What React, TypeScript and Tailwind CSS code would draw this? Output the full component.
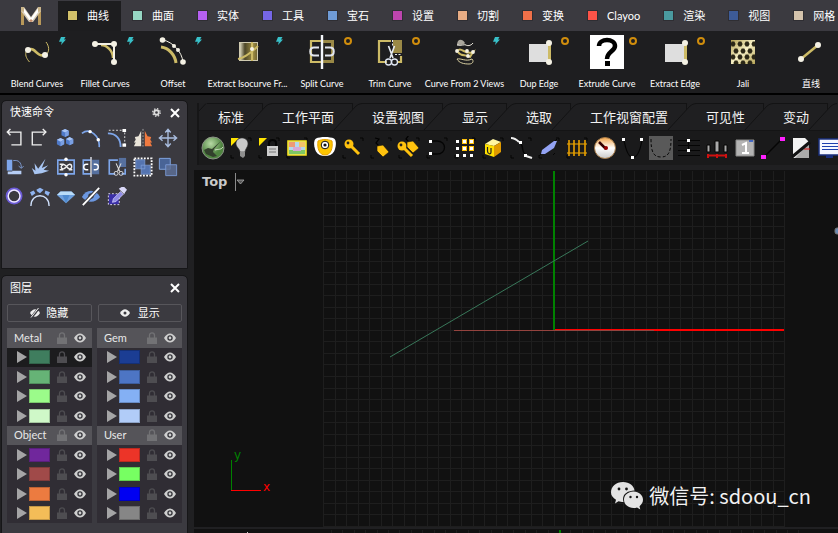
import React from 'react';

type IconProps = { children: React.ReactNode };

const GOLD = '#cdbb66';
const CREAM = '#f4f1e4';
const BLUE = '#7ea6ea';

/* ---------- main tabs ---------- */

const mainTabs = [
  { label: '曲线', color: '#d3c16a' },
  { label: '曲面', color: '#96d6c3' },
  { label: '实体', color: '#b660f2' },
  { label: '工具', color: '#7566e6' },
  { label: '宝石', color: '#6f9bd6' },
  { label: '设置', color: '#bd45ae' },
  { label: '切割', color: '#e8ac84' },
  { label: '变换', color: '#ef7049' },
  { label: 'Clayoo', color: '#fe5348' },
  { label: '渲染', color: '#4a9a9f' },
  { label: '视图', color: '#3d5b97' },
  { label: '网格', color: '#d3c2ab' },
];

function Logo() {
  return (
    <svg className="h-[18px] w-5" viewBox="0 0 20 18">
      <path d="M0 2h3v16H0zM17 2h3v16h-3z" fill="#b8985a" />
      <path d="M3 0l7 10 7-10h3v4l-8 11h-4L0 4V0z" fill="#d9cdb6" />
      <path d="M2 0l8 11 8-11v4l-7 10H9L2 4z" fill="#fff" />
      <path d="M0 0h3v5L0 4zM20 0h-3v5l3-1z" fill="#c9b48a" />
      <path d="M8 14l2-2 2 2-2 1z" fill="#c58b6a" />
    </svg>
  );
}

/* ---------- ribbon icons (34 x 34) ---------- */

function Big({ children }: IconProps) {
  return (
    <svg className="h-[34px] w-[34px]" viewBox="0 0 34 34" fill="none">
      {children}
    </svg>
  );
}

function Dots({ points, r = 3 }: { points: [number, number][]; r?: number }) {
  return (
    <>
      {points.map(([x, y]) => (
        <circle key={`${x}-${y}`} cx={x} cy={y} r={r} fill={CREAM} />
      ))}
    </>
  );
}

const BlendIcon = (
  <Big>
    <path d="M6 17c-1 4 1 7 3.500 10M26 7c3 4 4 9 0 13" stroke={GOLD} strokeWidth="1" />
    <path d="M8 15c8-4 8 8 17 5" stroke={GOLD} strokeWidth="2.800" />
    <Dots points={[[8, 15], [25, 20]]} />
  </Big>
);
const FilletIcon = (
  <Big>
    <path d="M13 10c6 0 12 6 12 13" stroke={GOLD} strokeWidth="2.500" />
    <path d="M7 9h19v18" stroke={CREAM} strokeWidth="2" />
    <Dots points={[[7, 9], [26, 9], [26, 27]]} />
  </Big>
);
const OffsetIcon = (
  <Big>
    <path d="M5 12c8 1 14 8 15 16" stroke={GOLD} strokeWidth="3" />
    <path d="M7 5c10 2 19 12 20 22" stroke={CREAM} strokeWidth="1" />
    <Dots points={[[6.5, 5], [27, 27]]} r={2.8} />
    <Dots points={[[18, 11], [22, 15]]} r={2} />
  </Big>
);
const IsoIcon = (
  <Big>
    <defs>
      <linearGradient id="iso">
        <stop offset="0" stopColor="#e6e2c8" />
        <stop offset=".3" stopColor="#4c4628" />
        <stop offset=".75" stopColor="#a08f45" />
        <stop offset="1" stopColor="#6d6130" />
      </linearGradient>
    </defs>
    <rect x="8.500" y="7.500" width="18" height="18" fill="url(#iso)" stroke="#cfcab0" />
    <path d="M21 7v19" stroke={GOLD} strokeWidth="2" />
    <path d="M7 24c6-1 11-4 20-13" stroke={GOLD} strokeWidth="2" />
    <circle cx="21" cy="14" r="2" fill={CREAM} />
  </Big>
);
const SplitIcon = (
  <Big>
    <path d="M17 5h12v23H17z" fill="#9a8946" />
    <path d="M18 8h8v17h-8z" fill="#26241d" />
    <path d="M17 6H6v21h11" stroke={GOLD} strokeWidth="2.200" />
    <path d="M14 12.500H9c-5 0-5 8 0 8h5M20 12.500h5c5 0 5 8 0 8h-5" stroke="#e3e7f0" strokeWidth="2" />
    <path d="M17 0v34" stroke="#f4f6fa" strokeWidth="2.400" />
  </Big>
);
const TrimIcon = (
  <Big>
    <path d="M20 5h9v13h-9z" fill="#9a8946" />
    <path d="M18 6H6v21h8M24 27h4v-6" stroke={GOLD} strokeWidth="2.200" />
    <path d="M15.500 11l4.500 12M21.500 11L17 23" stroke="#e6ecf4" strokeWidth="1.600" />
    <circle cx="15.500" cy="27" r="3" stroke="#dfe6f2" strokeWidth="1.300" />
    <circle cx="21.500" cy="27" r="3" stroke="#dfe6f2" strokeWidth="1.300" />
    <path d="M19.500 5v7M22 19.500h7" stroke="#e6ecf4" strokeDasharray="2 1.500" />
  </Big>
);
const TwoViewsIcon = (
  <Big>
    <path d="M9 10c0-6 5-7 8-2 0 1-4 2-8 2z" fill="#aaa79d" />
    <path d="M9 10c4 1 8-1 9 0s5 1 7-2" stroke={CREAM} />
    <path d="M9 17c3-7 9 4 16 0l-3 5c-5-3-9 0-12-5" stroke={GOLD} strokeWidth="2" />
    <Dots points={[[9, 16], [25, 17], [19, 16], [20, 21]]} r={1.9} />
    <path d="M9 24c4-1 9 3 15 0 2 2 1 5-3 5-5 0-10-1-12-5z" stroke="#d9cfa0" />
  </Big>
);
const EdgeIcon = (
  <Big>
    <path d="M7 9h19v18H7z" fill="#dedede" />
    <path d="M27.500 8v20" stroke={GOLD} strokeWidth="3" />
    <Dots points={[[27, 8], [27, 27]]} />
  </Big>
);
const ExtrudeIcon = (
  <Big>
    <path d="M0 0h34v34H0z" fill="#fff" />
    <path d="M9 11c0-8 16-8 16 0 0 5-8 6-8 13" stroke="#000" strokeWidth="4.500" />
    <path d="M15 26h5v5h-5z" fill="#000" />
  </Big>
);
const holes: [number, number][] = [
  [7, 9], [14, 9], [21, 9], [28, 9], [10, 16], [17, 16], [24, 16], [7, 22], [14, 22], [21, 22], [28, 22], [10, 28], [17, 28], [24, 28],
];
const JaliIcon = (
  <Big>
    <defs>
      <linearGradient id="jali" x2="1" y2="1">
        <stop offset="0" stopColor="#b5a356" />
        <stop offset=".5" stopColor="#f7f0c4" />
        <stop offset="1" stopColor="#b7a558" />
      </linearGradient>
      <clipPath id="jaliClip">
        <rect x="5" y="5" width="24" height="24" />
      </clipPath>
    </defs>
    <g clipPath="url(#jaliClip)">
      <path d="M5 5h24v24H5z" fill="url(#jali)" />
      {holes.map(([x, y]) => (
        <path key={`${x}-${y}`} d={`M${x - 2.6} ${y}l1.300-2.400h2.600l1.300 2.400-1.300 2.400h-2.600z`} fill="#2b2716" />
      ))}
    </g>
  </Big>
);
const LineIcon = (
  <Big>
    <path d="M7 24l17-14" stroke={GOLD} strokeWidth="2.500" />
    <Dots points={[[7, 24], [24, 10]]} />
  </Big>
);

type Badge = 'bolt' | 'ring' | null;
const commands: { label: string; icon: React.ReactNode; badge: Badge; wide?: boolean }[] = [
  { label: 'Blend Curves', icon: BlendIcon, badge: 'bolt' },
  { label: 'Fillet Curves', icon: FilletIcon, badge: 'bolt' },
  { label: 'Offset', icon: OffsetIcon, badge: 'bolt' },
  { label: 'Extract Isocurve Fr...', icon: IsoIcon, badge: 'bolt', wide: true },
  { label: 'Split Curve', icon: SplitIcon, badge: 'ring' },
  { label: 'Trim Curve', icon: TrimIcon, badge: 'ring' },
  { label: 'Curve From 2 Views', icon: TwoViewsIcon, badge: 'bolt', wide: true },
  { label: 'Dup Edge', icon: EdgeIcon, badge: 'ring' },
  { label: 'Extrude Curve', icon: ExtrudeIcon, badge: 'ring' },
  { label: 'Extract Edge', icon: EdgeIcon, badge: 'ring' },
  { label: 'Jali', icon: JaliIcon, badge: null },
  { label: '直线', icon: LineIcon, badge: null },
];

function BadgeMark({ kind }: { kind: Badge }) {
  if (kind === 'bolt') {
    return (
      <svg className="absolute top-1.5 right-[5px] h-2 w-[7px]" viewBox="0 0 7 8">
        <path d="M2 0h4.500L5 2.500h2L2 8l.8-3.300H0z" fill="#38c0c8" />
      </svg>
    );
  }
  if (kind === 'ring') {
    return <span className="absolute top-1.5 right-1 h-2 w-2 rounded-full border-2 border-[#d08d0c]" />;
  }
  return null;
}

/* ---------- quick command icons ---------- */

function Mid({ children }: IconProps) {
  return (
    <svg className="h-5 w-5" viewBox="0 0 22 22" fill="none">
      {children}
    </svg>
  );
}

function Cube({ x, y }: { x: number; y: number }) {
  return (
    <g transform={`translate(${x} ${y})`}>
      <path d="M4 0l4 2v5L4 9 0 7V2z" fill="#4f79c8" />
      <path d="M4 0l4 2-4 2-4-2z" fill="#a9c5f5" />
      <path d="M4 4l4-2v5L4 9z" fill="#7ba0e3" />
    </g>
  );
}

const quickIcons: { name: string; icon: React.ReactNode }[] = [
  { name: '撤销', icon: <Mid><path d="M3 4.500h14.500v14H7M6 1L2.500 4.500 6 8" stroke="#f0f0f0" strokeWidth="1.500" /></Mid> },
  { name: '重做', icon: <Mid><path d="M16 4.500H2.500v14H13M14 1l3.500 3.500L14 8" stroke="#f0f0f0" strokeWidth="1.500" /></Mid> },
  { name: '实体', icon: <Mid><Cube x={6} y={1} /><Cube x={1} y={11} /><Cube x={11} y={10} /></Mid> },
  { name: '曲线点', icon: <Mid><path d="M1 6c9-7 20 3 19 15" stroke={BLUE} strokeWidth="1.800" /><circle cx="10" cy="4" r="1.900" fill="#fff" /><circle cx="19" cy="13" r="1.900" fill="#fff" /></Mid> },
  { name: '圆角', icon: <Mid><path d="M2 2.500h17.500V18" stroke="#e8e8e8" strokeDasharray="2 2" /><path d="M1 6c9 0 14 6 14 15" stroke={BLUE} strokeWidth="2" /><path d="M17 1h4v3.500h-4zM17 17h4v3.500h-4z" fill="#fff" /></Mid> },
  { name: '镜像', icon: <Mid><path d="M11 1v20" stroke="#aaa" strokeDasharray="2 1.500" /><path d="M9 3v17H1l2-4H1l2-3-1-3 4-1z" fill="#e9e4d9" /><path d="M13 3v17h8l-2-4h2l-2-3 1-3-4-1z" fill="#f07a40" /></Mid> },
  { name: '移动', icon: <Mid><path d="M11 1.500v19M1.500 11h19M8 5l3-3.500L14 5M8 17l3 3.500 3-3.500M5 8l-3.500 3L5 14M17 8l3.500 3-3.500 3" stroke="#a9bddf" strokeWidth="1.500" /></Mid> },
  { name: '旋转', icon: <Mid><path d="M2 3h6v12H2z" fill={BLUE} /><path d="M8 15h10v4H3v-3h5z" fill="#b6cdf5" /><path d="M9 4c6-1 9 2 9 8M15 10l3 2.500L20.500 10" stroke="#7f9cd2" /></Mid> },
  { name: '炸开', icon: <Mid><path d="M5 19L2 12l4 3-1-8 4 6 8-11-4 10 7-3-5 5 6 1-8 3z" fill="#a8c5f2" /></Mid> },
  { name: '组合', icon: <Mid><path d="M2 3.500h18v15H2z" stroke={BLUE} strokeWidth="1.800" /><path d="M4 8h4c3 0 4 5 7 5s3-5 0-5-4 5-7 5-3-4 0-4M4 14h4M14 14h4" stroke="#f0f0f0" strokeWidth="1.500" /><circle cx="11" cy="2.500" r="1.900" fill="#fff" /><circle cx="11" cy="19.500" r="1.900" fill="#fff" /></Mid> },
  { name: '分割', icon: <Mid><path d="M12 3h8v16h-8z" fill="#56709f" /><path d="M11 3.500H2.500v15H11" stroke={BLUE} strokeWidth="1.800" /><path d="M8 8H6c-4 0-4 6 0 6h2M14 8h2c4 0 4 6 0 6h-2" stroke="#fff" strokeWidth="1.500" /><path d="M11 0v22" stroke="#c9cbd2" strokeWidth="1.800" /></Mid> },
  { name: '修剪', icon: <Mid><path d="M13 1h8v10h-8z" fill="#56709f" /><path d="M12 3.500H2.500v15H9M16 18.500h4V13" stroke={BLUE} strokeWidth="1.800" /><path d="M10 7l4 9M15.500 7l-4 9" stroke="#ddd" strokeWidth="1.200" /><circle cx="10" cy="18" r="2.200" stroke="#ddd" /><circle cx="15.500" cy="18" r="2.200" stroke="#ddd" /></Mid> },
  { name: '群组', icon: <Mid><path d="M3 3h10v10H3zM9 9h10v10H9z" fill="#5574b0" stroke="#86a6e0" strokeWidth=".7" /><path d="M1.500 1.500h19v19h-19z" stroke="#fff" strokeWidth="2" strokeDasharray="2 1.500" /></Mid> },
  { name: '复制', icon: <Mid><path d="M1.500 1.500h12v12h-12z" fill="#496496" stroke="#86abe8" /><path d="M8.500 8.500h12v12h-12z" fill="#5d6f95" fillOpacity=".85" stroke="#7899d4" /></Mid> },
  { name: '圆环', icon: <Mid><circle cx="10" cy="11" r="7.500" stroke="#6c5bd8" strokeWidth="3.500" /><circle cx="10" cy="11" r="6.500" stroke="#efeaff" strokeWidth="1.600" /></Mid> },
  { name: '沿曲线', icon: <Mid><path d="M1 22c0-15 20-15 20 0" stroke="#cfe0fb" strokeWidth="1.500" /><path d="M0 7l4-2 2 3-4 3zM7 4l4-2 4 2-4 4-3-2zM17 5l5 2-2 4-4-3z" fill="#8fb4f0" /></Mid> },
  { name: '钻石', icon: <Mid><path d="M5 6h12l4 4-10 9L1 10z" fill="#6ea0de" /><path d="M5 6h12l4 4H1z" fill="#b9dcf8" /><path d="M7 10h8l-4 9z" fill="#4f8bd0" /></Mid> },
  { name: '隐藏', icon: <Mid><path d="M1 12c5-9 15-9 20 0-5 7-15 7-20 0z" fill="#6c97e0" /><circle cx="11" cy="11" r="3" fill="#33363f" /><path d="M2 21L20 2" stroke="#3b3a40" strokeWidth="4" /><path d="M2 21L20 2" stroke="#fff" strokeWidth="2" /></Mid> },
  { name: '取样', icon: <Mid><path d="M2 9h11v11H2z" fill="#3a2fa8" /><path d="M1.500 8.500h12v12h-12z" stroke="#e4e0ff" strokeDasharray="2 2" /><path d="M6 18l1-4 8-8 3 3-8 8z" fill="#8f8be6" stroke="#e4e0ff" strokeWidth=".7" /><path d="M13 3l6 6 1-2 2-3-3-3-3 0z" fill="#d9d8f8" /></Mid> },
];

/* ---------- layer panel ---------- */

const layerTables = [
  [
    { name: 'Metal', colors: ['#3f7d5e', '#66b376', '#9bfb8a', '#cff8c8'] },
    { name: 'Object', colors: ['#70279c', '#a04a49', '#ec7b40', '#f3bd58'] },
  ],
  [
    { name: 'Gem', colors: ['#1b3d93', '#4d75c4', '#84b0f4', '#b1ccf8'] },
    { name: 'User', colors: ['#ec3428', '#77ff62', '#0000f2', '#868686'] },
  ],
];

function Lock({ tone }: { tone: string }) {
  return (
    <svg className="h-3 w-2.5" viewBox="0 0 10 12" fill="none">
      <path d="M2.500 6V3.500c0-3.400 5-3.400 5 0V6" stroke={tone} strokeWidth="1.300" />
      <path d="M0 5.500h10V12H0z" fill={tone} />
    </svg>
  );
}

function Eye({ tone = '#cfcfcf' }: { tone?: string }) {
  return (
    <svg className="h-2.5 w-3" viewBox="0 0 12 10" fill="none">
      <path d="M0 5c3.500-6 8.500-6 12 0-3.500 6-8.500 6-12 0z" fill={tone} />
      <circle cx="6" cy="5" r="2.700" fill="#323238" />
      <circle cx="6" cy="5" r="1.400" fill={tone} />
    </svg>
  );
}

function LayerTable({ groups, marked }: { groups: (typeof layerTables)[number]; marked: boolean }) {
  return (
    <div className="grid h-[195px] flex-1 auto-rows-fr bg-[#302d34]">
      {groups.map((group, g) => (
        <React.Fragment key={group.name}>
          <div className="flex items-center bg-[#555459] pr-1.5 pl-[7px]">
            <span className="flex-1 text-[11px] leading-4 text-[#e8e8e8]">{group.name}</span>
            <button aria-label={`${group.name} lock`} className="mr-[7px]"><Lock tone="#727275" /></button>
            <button aria-label={`${group.name} visible`}><Eye /></button>
          </div>
          {group.colors.map((color, i) => (
            <div key={color} className={`flex items-center pr-1.5 pl-2.5 ${marked && g === 0 && i === 0 ? 'bg-[#1c1c1e]' : ''}`}>
              <svg className="mr-0.5 h-3 w-2.5" viewBox="0 0 10 12"><path d="M0 0l10 6-10 6z" fill="#a5a5a6" /></svg>
              <span className="h-3.5 w-[21px] border border-black/20" style={{ backgroundColor: color }} />
              <span className="flex-1" />
              <button aria-label={`${group.name} ${i + 1} lock`} className="mr-[7px]"><Lock tone="#4e4d51" /></button>
              <button aria-label={`${group.name} ${i + 1} visible`}><Eye /></button>
            </div>
          ))}
        </React.Fragment>
      ))}
    </div>
  );
}

function CloseButton() {
  return (
    <button aria-label="关闭" className="ml-[9px]">
      <svg className="h-2.5 w-2.5" viewBox="0 0 10 10"><path d="M1 1l8 8M9 1L1 9" stroke="#fff" strokeWidth="2" /></svg>
    </button>
  );
}

/* ---------- viewport tabs and toolbar ---------- */

const viewTabs = ['标准', '工作平面', '设置视图', '显示', '选取', '工作视窗配置', '可见性', '变动', ''];

function Tool({ name, children, bare = false }: { name: string; children: React.ReactNode; bare?: boolean }) {
  return (
    <button aria-label={name} className="w-7 shrink-0">
      <svg className="mx-auto h-6 w-6" viewBox="0 0 24 24" fill="none">
        {!bare && <path d="M2 19v3h3M19 2h3v3" stroke="#050505" strokeWidth="1" />}
        {children}
      </svg>
    </button>
  );
}

function Key({ x = 0, y = 0 }: { x?: number; y?: number }) {
  return (
    <g transform={`translate(${x} ${y})`}>
      <path d="M9 9l9 9M14 16l2-2" stroke="#ffc20e" strokeWidth="3" />
      <circle cx="8" cy="8" r="4.500" fill="#ffc20e" />
      <circle cx="7" cy="7" r="1.400" fill="#222" />
    </g>
  );
}

function Tag({ x = 0, y = 0 }: { x?: number; y?: number }) {
  return (
    <g transform={`translate(${x} ${y})`}>
      <path d="M6 2l4 1-3 4 3 3" stroke="#000" strokeWidth="1.200" />
      <path d="M8 10l6-1 6 7-6 5-6-6z" fill="#ffc20e" stroke="#111" strokeWidth=".6" />
    </g>
  );
}

const squares = (points: [number, number][], color = '#fff') =>
  points.map(([x, y]) => <path key={`${x}-${y}`} d={`M${x} ${y}h3v3h-3z`} fill={color} />);

function Toolbar() {
  return (
    <div className="flex h-[34px] items-center overflow-hidden bg-[#1a1a1b]">
      <Tool name="渲染" bare>
        <defs>
          <radialGradient id="globe" cx=".4" cy=".3"><stop offset="0" stopColor="#b6d8a4" /><stop offset="1" stopColor="#4f8440" /></radialGradient>
        </defs>
        <circle cx="12" cy="12" r="11" fill="url(#globe)" stroke="#8a9185" />
        <path d="M3 14l4-2 4 1 9-8-7 8-1 3 4 4-4 1-7-3z" fill="#32402c" />
        <path d="M14 14c3-1 6 0 8-3" stroke="#d3e6c9" />
      </Tool>
      <Tool name="灯光">
        <path d="M2 2h8L2 10z" fill="#ffe400" />
        <path d="M7 8c0-8 12-8 12 0 0 3-3 5-3 8h-5c0-3-4-5-4-8z" fill="#c9c9c9" stroke="#333" strokeWidth=".6" />
        <path d="M11 16h5v4l-2 2-3-2z" fill="#8e8e8e" />
      </Tool>
      <Tool name="锁定">
        <path d="M2 2h8L2 10z" fill="#ffe400" />
        <path d="M12 10V7c0-4 7-4 7 0v3" stroke="#050505" strokeWidth="2" />
        <path d="M10 10h11v10H10z" fill="#cfcfcf" />
        <path d="M12 13h7M12 16h7" stroke="#777" />
      </Tool>
      <Tool name="图层">
        <path d="M3 5h18v14H3z" fill="#b4d8ee" stroke="#f7e31c" strokeWidth="1.600" />
        <path d="M4 6h6v5H4z" fill="#ee9a78" /><path d="M14 6h6v5h-6z" fill="#f4c26c" /><path d="M4 14h16v4H4z" fill="#7fc765" /><path d="M8 11h8v4H8z" fill="#d7a9d8" />
      </Tool>
      <Tool name="属性" bare>
        <path d="M3 2.500c4-2 14-2 18 0 3 2 2 9 0 13-3 6-15 6-18 0-2-4-3-11 0-13z" fill="#fff" />
        <path d="M5 5c4-2 10-2 14 0 1 7-1 14-7 14S4 12 5 5z" fill="#fdc500" stroke="#e5a100" />
        <circle cx="12" cy="9" r="3.800" fill="#fff" stroke="#111" /><circle cx="12" cy="9" r="1.600" fill="#111" />
      </Tool>
      <Tool name="钥匙"><Key /></Tool>
      <Tool name="标签"><Tag /></Tool>
      <Tool name="钥匙组"><Key x={-3} y={2} /><Tag x={2} y={-4} /></Tool>
      <Tool name="控制点"><path d="M5 5h7c10 0 10 13 0 13H5" stroke="#050505" strokeWidth="1.300" />{squares([[4, 4], [4, 16]])}</Tool>
      <Tool name="点格">
        {squares([[3, 4], [3, 11], [3, 18], [10, 18], [17, 18]])}
        <path d="M9 3h5v5H9zM16 3h5v5h-5zM9 10h5v5H9zM16 10h5v5h-5z" fill="#ffc20e" />
        {squares([[10, 4], [17, 4], [10, 11], [17, 11]])}
      </Tool>
      <Tool name="立方体">
        <path d="M4 8l8-5 8 3-7 4z" fill="#fff6a0" /><path d="M4 8l9 2v11l-9-3z" fill="#ffe000" /><path d="M13 10l7-4v10l-7 5z" fill="#e09a00" /><path d="M6.500 11v4c0 3 3.500 4 3.500 1v-4" stroke="#222" strokeWidth="1.200" />
      </Tool>
      <Tool name="曲线">
        <path d="M10 6c6 2 1 12 8 13" stroke="#050505" strokeWidth="1.400" /><path d="M2 2c3 0 5 1 8 4M17 20l6 2" stroke="#eee" strokeWidth="2" />{squares([[10, 5], [15, 18]])}
      </Tool>
      <Tool name="平面"><path d="M2 20L20 3M16 19l2-2" stroke="#050505" /><path d="M5 14l12-9h3l-3 7-9 6H4z" fill="#93a3f4" /></Tool>
      <Tool name="栅栏"><path d="M2 8h20M2 17h20" stroke="#ffb400" /><path d="M4 4v16M9 4v16M14 4v16M20 4v16" stroke="#e9a000" strokeWidth="1.600" /></Tool>
      <Tool name="仪表" bare>
        <defs><linearGradient id="gauge" x2="0" y2="1"><stop offset="0" stopColor="#f3a64b" /><stop offset=".5" stopColor="#fff" /><stop offset="1" stopColor="#c9c9c9" /></linearGradient></defs>
        <circle cx="12" cy="12" r="10.500" fill="url(#gauge)" stroke="#a57a48" /><path d="M6 6l7 7" stroke="#300" strokeWidth="2.500" /><circle cx="13" cy="12" r="2" fill="#900" />
      </Tool>
      <Tool name="抛物线" bare><path d="M3 4c4 23 14 23 18 0" stroke="#050505" strokeWidth="1.200" />{squares([[1, 2], [19, 2], [10, 20]])}</Tool>
      <Tool name="虚线" bare><path d="M0 0h24v24H0z" fill="#595959" /><path d="M2 3c0 12 2 18 10 18S22 15 22 3" stroke="#050505" strokeDasharray="3 2" /></Tool>
      <Tool name="间距" bare><path d="M1 4.500h22M1 9.500h22M1 14.500h22M1 19.500h22M11.500 4v10" stroke="#050505" />{squares([[10, 3], [10, 13]])}</Tool>
      <Tool name="对齐" bare><path d="M2 9h3v7H2zM10 5h4v11h-4zM19 9h3v7h-3z" fill="#aaa" stroke="#050505" /><path d="M3 19.500h18M3 18v4M12 18v4M21 18v4" stroke="#d01010" strokeWidth="2" /></Tool>
      <Tool name="编号" bare>
        <path d="M3 4h18v16H3z" fill="#b4b4b4" stroke="#888" /><path d="M16 5h4" stroke="#2653c8" strokeWidth="1.500" /><path d="M9 9l4-2v10M9 17h7" stroke="#fff" strokeWidth="2" />
      </Tool>
      <Tool name="直线" bare><path d="M3 21L21 3" stroke="#050505" strokeWidth="1.500" /><path d="M0 19h5v4H0zM19 1h5v4h-5z" fill="#ff20ff" /></Tool>
      <Tool name="图纸" bare>
        <path d="M4 2h12l4 4v16H4z" fill="#f3f3f3" /><path d="M20 7v15H6z" fill="#aaa" /><path d="M15 13h6" stroke="#e01010" /><path d="M3 21L21 6" stroke="#111" strokeWidth="3" />
      </Tool>
      <Tool name="屏幕" bare>
        <path d="M2 3h22v16H2z" fill="#f4f7ff" stroke="#1a2f7c" strokeWidth="1.500" /><path d="M5 7.500h16M5 10.500h16M5 13.500h16" stroke="#1c3fae" strokeWidth="1.200" /><path d="M9 19h7v3H9z" fill="#1a2f7c" />
      </Tool>
    </div>
  );
}

/* ---------- drawing canvas ---------- */

const columns = Array.from({ length: 41 }, (_, i) => Math.round(129 + i * 11.53) + 0.5);
const rows = Array.from({ length: 31 }, (_, i) => Math.round(10 + i * 11.53) + 0.5);
const lowerTicks = Array.from({ length: 42 }, (_, i) => Math.round(137 + i * 11.4) + 0.5);

function Scene() {
  return (
    <svg className="absolute inset-0 h-full w-full" fill="none">
      {columns.map((x) => <line key={x} x1={x} x2={x} y1="1" y2="356" stroke="#1e1e1e" />)}
      {rows.map((y) => <line key={y} y1={y} y2={y} x1="129" x2="591" stroke="#1e1e1e" />)}
      <path d="M260 160.500h100" stroke="#94433e" />
      <path d="M360 160h230" stroke="#ff0000" strokeWidth="2" />
      <path d="M360 160.500h100" stroke="#94433e" />
      <path d="M360 1v159" stroke="#008200" strokeWidth="2" />
      <path d="M196 187L394 71" stroke="#39785a" />
      <path d="M37.500 290v30" stroke="#008200" />
      <path d="M37 320.500h30" stroke="#ff0000" />
      <rect x="641" y="58" width="8" height="6" rx="2" fill="#6d8bb4" stroke="#777" />
      <text x="40" y="289" fontSize="12" fontFamily="'DejaVu Sans', sans-serif" fill="#008200">y</text>
      <text x="69" y="321" fontSize="12" fontFamily="'DejaVu Sans', sans-serif" fill="#ff0000">x</text>
    </svg>
  );
}

function Watermark() {
  return (
    <div className="absolute right-[27px] bottom-[17px] flex items-center gap-1.5">
      <svg className="h-7 w-8" viewBox="0 0 32 28">
        <path d="M12 0c6.500 0 11 4 11.500 8.500C17 8.500 12 12 12 17c0 1 .2 2 .5 3-2 0-3.500-.2-5-.7L4 21.500l1-3.800C2 16 0 13.500 0 10.500 0 4.500 5 0 12 0z" fill="#e4e4e4" />
        <path d="M22.500 9.500c5.500 0 9.500 3.700 9.500 8.300 0 2.700-1.400 4.800-3.500 6.400l.8 3.300-3.300-2c-1 .4-2.200.5-3.500.5-5.300 0-9.500-3.500-9.500-8.200s4-8.300 9.500-8.300z" fill="#e4e4e4" />
        <g fill="#161616"><circle cx="8" cy="7" r="1.400" /><circle cx="15.500" cy="7" r="1.400" /><circle cx="19.500" cy="15" r="1.200" /><circle cx="26" cy="15" r="1.200" /></g>
      </svg>
      <span className="font-['Noto_Sans_CJK_SC',sans-serif] text-xl leading-7 text-[#f2f2f2]">微信号: sdoou_cn</span>
    </div>
  );
}

export default function App() {
  return (
    <div className="flex h-screen flex-col overflow-hidden bg-[#202022] font-['Lato','Noto_Sans_CJK_SC',sans-serif] text-white">
      <header className="flex h-[31px] shrink-0 bg-[#3b3a40]">
        <div className="flex w-[58px] shrink-0 items-center pl-[21px]"><Logo /></div>
        <nav className="flex min-w-0 flex-1 gap-0.5 overflow-hidden pt-px">
          {mainTabs.map((tab, i) => (
            <button key={tab.label} className={`flex shrink-0 items-center gap-2.5 pr-3 pl-2.5 text-[11px] ${i === 0 ? 'bg-[#1d1d1f]' : ''}`}>
              <span className="mb-px h-[9px] w-[9px] outline outline-black/20" style={{ backgroundColor: tab.color }} />
              {tab.label}
            </button>
          ))}
        </nav>
      </header>

      <div className="flex h-16 shrink-0 overflow-hidden border-b-2 border-black bg-[#1e1e20] pl-[3px]">
        {commands.map((c) => (
          <button key={c.label} className={`relative flex shrink-0 flex-col items-center pt-1 ${c.wide ? 'w-[81px]' : 'w-[68px]'}`}>
            {c.icon}
            <span className="mt-[9px] text-[9px] leading-3 whitespace-nowrap">{c.label}</span>
            <BadgeMark kind={c.badge} />
          </button>
        ))}
      </div>

      <div className="flex min-h-0 flex-1 pt-1.5">
        <aside className="mr-[7px] ml-0.5 flex w-[185px] shrink-0 flex-col gap-2">
          <section className="h-[167px] shrink-0 rounded-t-sm bg-[#3b3a40] outline outline-[#161618]">
            <div className="flex h-[23px] items-center pr-[7px] pl-2">
              <h2 className="flex-1 text-[11px]">快速命令</h2>
              <button aria-label="设置">
                <svg className="h-[9px] w-[9px]" viewBox="0 0 10 10" fill="none"><circle cx="5" cy="5" r="2.500" stroke="#ddd" strokeWidth="2" /><circle cx="5" cy="5" r="4.200" stroke="#ddd" strokeWidth="1.400" strokeDasharray="1.600 1.700" /></svg>
              </button>
              <CloseButton />
            </div>
            <div className="mr-1.5 grid grid-cols-7 gap-y-[9px] pt-1">
              {quickIcons.map((q) => (
                <button key={q.name} aria-label={q.name} className="flex justify-center">{q.icon}</button>
              ))}
            </div>
          </section>

          <section className="flex-1 rounded-t-sm bg-[#3b3a40] outline outline-[#161618]">
            <div className="flex h-6 items-center pr-[7px] pl-2">
              <h2 className="flex-1 text-[11px]">图层</h2>
              <CloseButton />
            </div>
            <div className="flex gap-1.5 px-[5px] pt-1">
              <button className="flex h-[18px] flex-1 items-center justify-center gap-1.5 rounded-xs border border-[#57565b] text-[11px]">
                <svg className="h-2.5 w-2.5" viewBox="0 0 10 10" fill="none"><path d="M0 5c3-5 7-5 10 0-3 5-7 5-10 0z" fill="#eee" /><circle cx="5" cy="5" r="1.300" fill="#3b3a40" /><path d="M1 10L9 0" stroke="#3b3a40" strokeWidth="2.500" /><path d="M1 9.500L8.500 0" stroke="#eee" /></svg>
                隐藏
              </button>
              <button className="flex h-[18px] flex-1 items-center justify-center gap-2 rounded-xs border border-[#57565b] text-[11px]">
                <svg className="h-2 w-2.5" viewBox="0 0 10 8"><path d="M0 4c3-5 7-5 10 0-3 5-7 5-10 0z" fill="#eee" /><circle cx="5" cy="4" r="1.500" fill="#3b3a40" /></svg>
                显示
              </button>
            </div>
            <div className="flex gap-[5px] px-[5px] pt-1.5">
              {layerTables.map((groups, i) => <LayerTable key={groups[0].name} groups={groups} marked={i === 0} />)}
            </div>
          </section>
        </aside>

        <main className="flex min-w-0 flex-1 flex-col">
          <div className="mt-0.5 ml-[3px] border-l-2 border-[#161617]">
            <div className="flex h-7 overflow-hidden border-b border-[#141415] bg-[#1f1f21]">
              {viewTabs.map((tab, i) => (
                <button key={tab || 'more'} aria-label={tab || '更多'} className="relative shrink-0 px-[19px] pt-0.5 text-[13px] text-[#f2f2f2]">
                  <svg className="absolute top-0 left-0 h-7 w-full overflow-visible" fill="none" stroke="#131314">
                    {i > 0 && <path d="M-20 28L3 3q3-2.500 6-2.500" />}
                    {i === 0 && <path d="M0 8l7-7.500" />}
                    {tab && <line x1="8" x2="100%" y1=".5" y2=".5" />}
                    {i > 0 && <path d="M-.5 1v6" />}
                  </svg>
                  {tab}
                </button>
              ))}
            </div>
            <Toolbar />
          </div>

          <section className="relative mt-[5px] min-h-0 flex-1 overflow-hidden bg-[#111111]">
            <Scene />
            <button className="relative flex h-[23px] items-center pl-2 text-[#c9c9c9]">
              <span className="w-[33px] text-left font-['DejaVu_Sans',sans-serif] text-[13px] leading-4 font-bold">Top</span>
              <svg className="h-[18px] w-2.5" viewBox="0 0 10 18" fill="none"><path d="M.5 0v18" stroke="#8a8a8a" /><path d="M2 7h7L5.500 11z" fill="#555" stroke="#aaa" strokeWidth=".8" /></svg>
            </button>
            <Watermark />
          </section>
          <section className="h-1.5 shrink-0 border-t-2 border-[#202022] bg-[#111111]">
            <svg className="block h-1 w-full" fill="none">
              {lowerTicks.map((x) => <line key={x} x1={x} x2={x} y1="1" y2="4" stroke="#1e1e1e" />)}
              <path d="M366 1v3" stroke="#008200" strokeWidth="2" />
              <path d="M53 3h1v1h-1z" fill="#ccc" />
            </svg>
          </section>
        </main>
      </div>
    </div>
  );
}
